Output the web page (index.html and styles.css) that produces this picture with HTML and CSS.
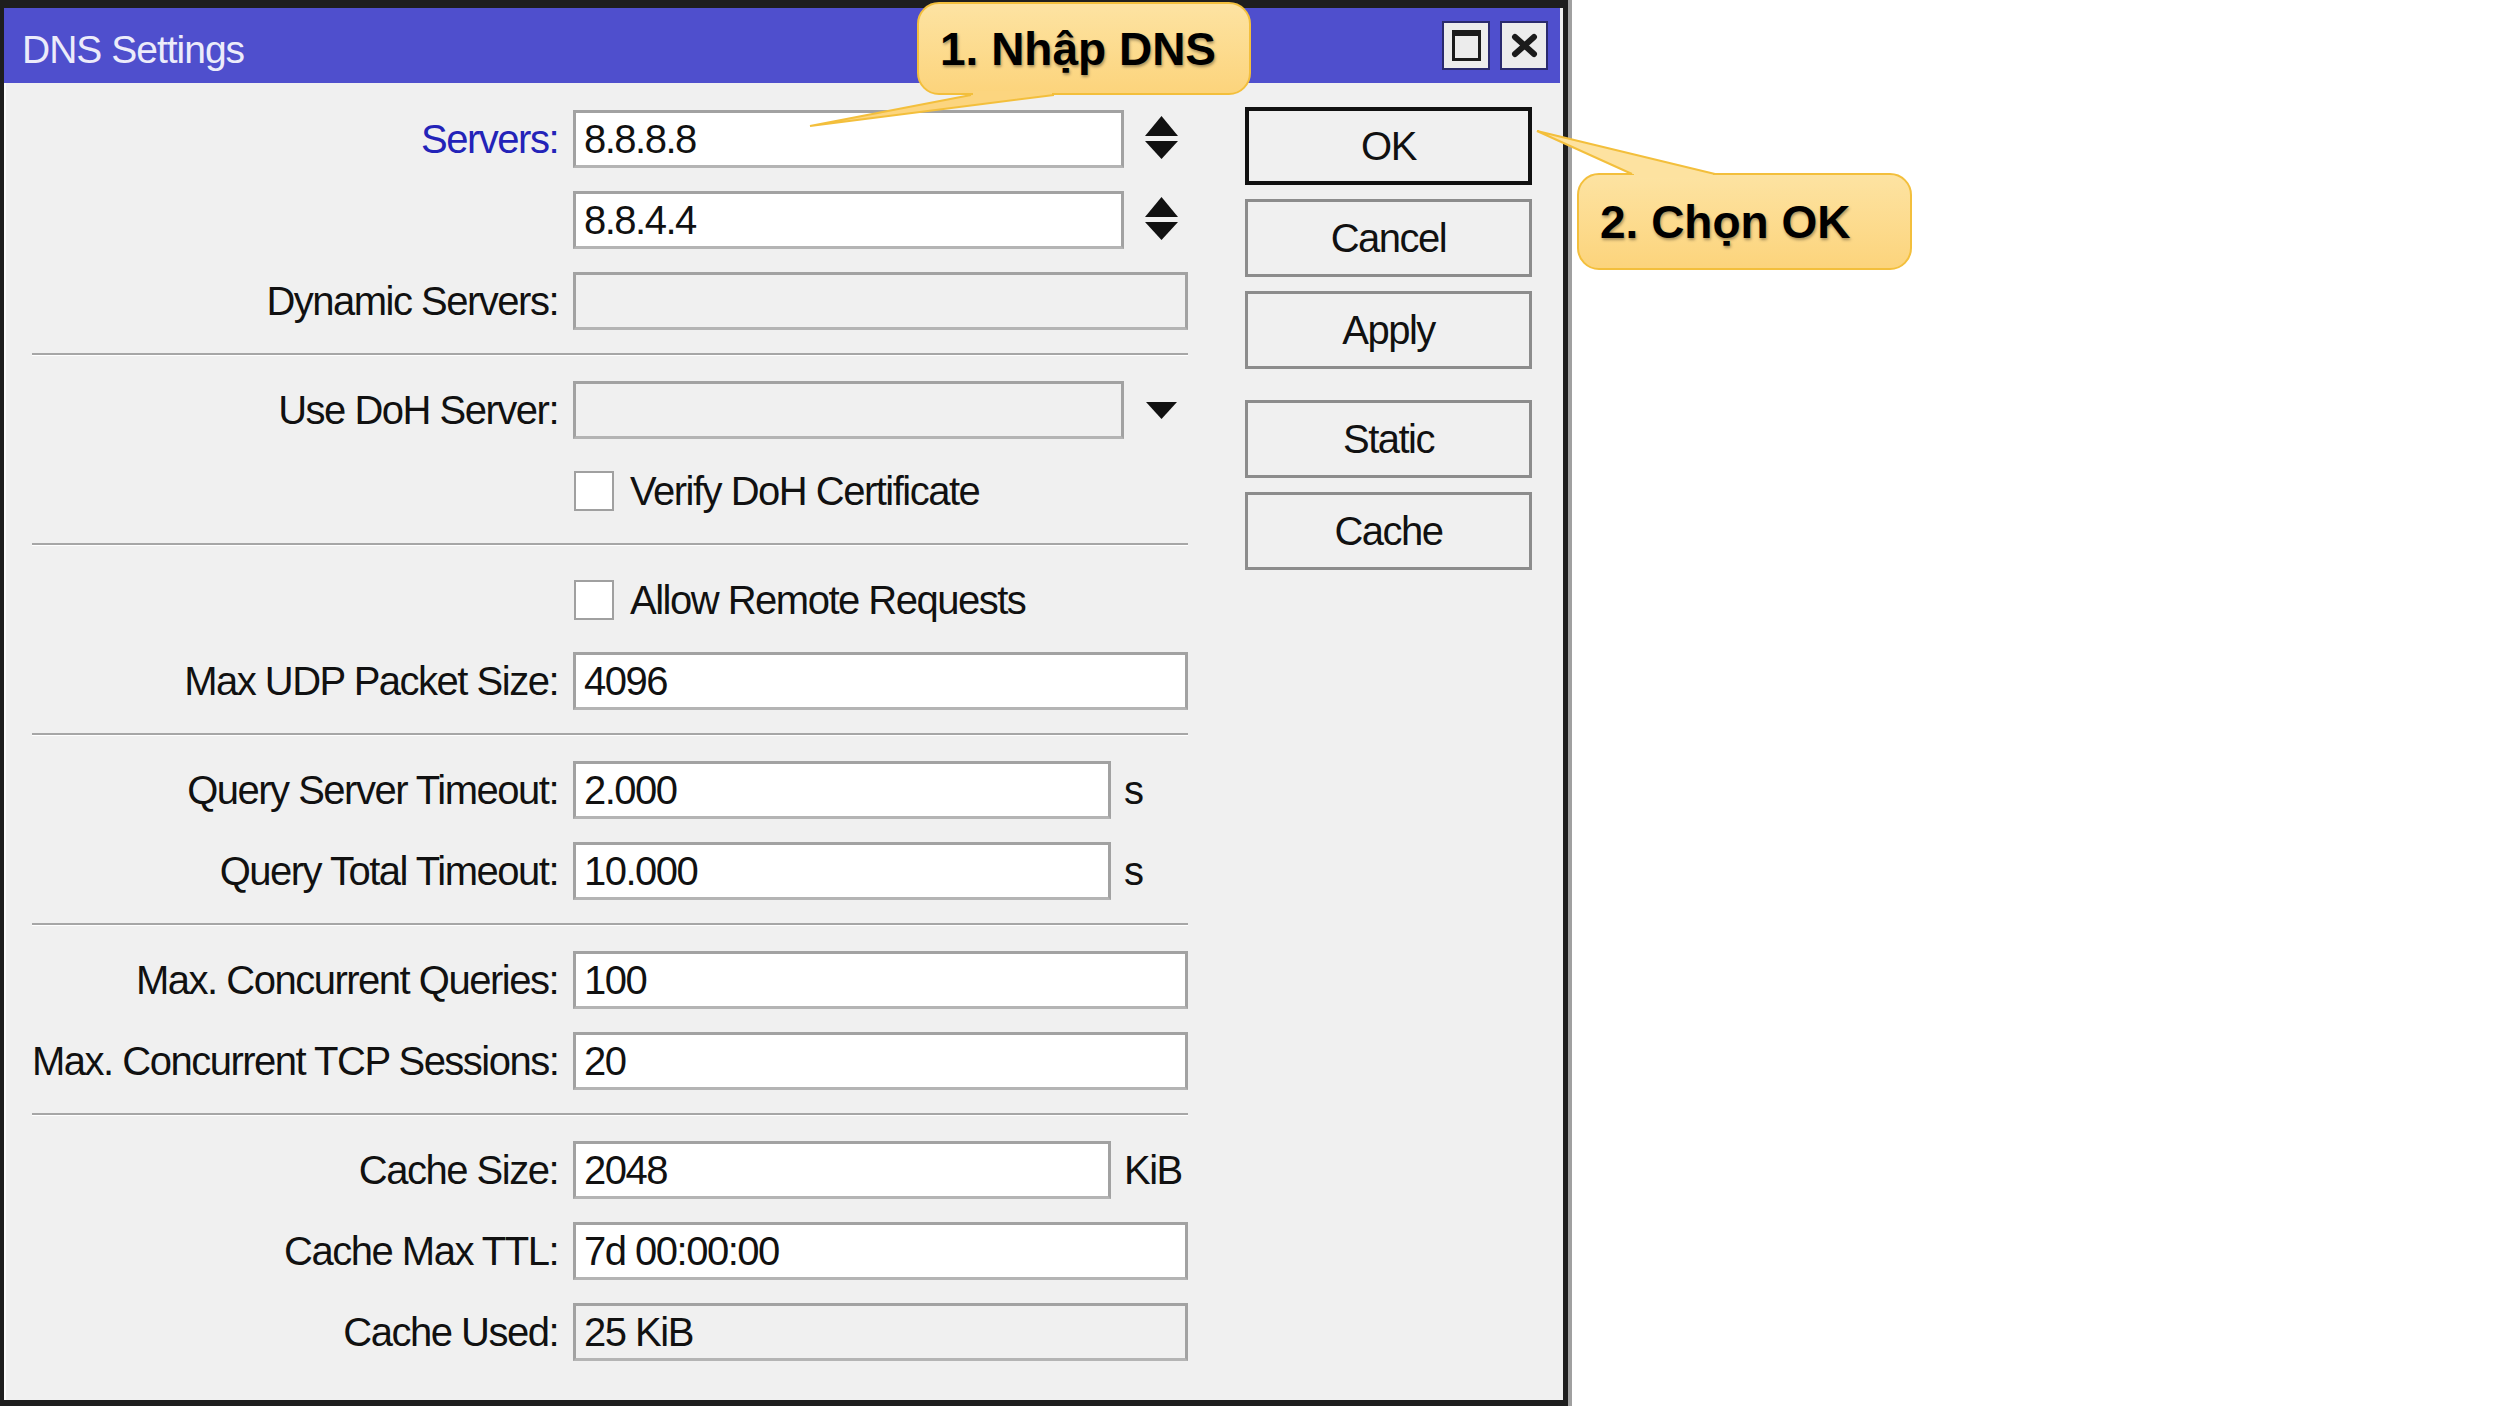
FILE: index.html
```html
<!DOCTYPE html>
<html>
<head>
<meta charset="utf-8">
<link rel="stylesheet" href="styles.css">
</head>
<body>
<div class="page">
  <div class="window">
    <div class="titlebar">
      <span class="title">DNS Settings</span>
      <div class="tb-buttons">
        <div class="tb-btn"><span class="max-icon"></span></div>
        <div class="tb-btn">
          <svg width="27" height="25" viewBox="0 0 27 25"><path d="M4 4 L23 21 M23 4 L4 21" stroke="#1b1b1b" stroke-width="6" stroke-linecap="round"/></svg>
        </div>
      </div>
    </div>
    <div class="content">
      <div class="form">
        <div class="row">
          <div class="label label-link">Servers:</div>
          <div class="field">
            <div class="input w-spin">8.8.8.8</div>
            <svg class="spin" width="33" height="43" viewBox="0 0 33 43"><polygon points="16.5,0 33,20 0,20" fill="#111"/><polygon points="0,25 33,25 16.5,43" fill="#111"/></svg>
          </div>
        </div>
        <div class="row">
          <div class="label"></div>
          <div class="field">
            <div class="input w-spin">8.8.4.4</div>
            <svg class="spin" width="33" height="43" viewBox="0 0 33 43"><polygon points="16.5,0 33,20 0,20" fill="#111"/><polygon points="0,25 33,25 16.5,43" fill="#111"/></svg>
          </div>
        </div>
        <div class="row">
          <div class="label">Dynamic Servers:</div>
          <div class="field"><div class="input w-full ro"></div></div>
        </div>
        <div class="sep"></div>
        <div class="row">
          <div class="label">Use DoH Server:</div>
          <div class="field">
            <div class="input w-spin ro"></div>
            <svg class="drop" width="31" height="17" viewBox="0 0 31 17"><polygon points="0,0 31,0 15.5,17" fill="#111"/></svg>
          </div>
        </div>
        <div class="row">
          <div class="label"></div>
          <div class="field"><span class="check"></span><span class="check-label">Verify DoH Certificate</span></div>
        </div>
        <div class="sep"></div>
        <div class="row">
          <div class="label"></div>
          <div class="field"><span class="check"></span><span class="check-label">Allow Remote Requests</span></div>
        </div>
        <div class="row">
          <div class="label">Max UDP Packet Size:</div>
          <div class="field"><div class="input w-full">4096</div></div>
        </div>
        <div class="sep"></div>
        <div class="row">
          <div class="label">Query Server Timeout:</div>
          <div class="field"><div class="input w-unit">2.000</div><span class="unit">s</span></div>
        </div>
        <div class="row">
          <div class="label">Query Total Timeout:</div>
          <div class="field"><div class="input w-unit">10.000</div><span class="unit">s</span></div>
        </div>
        <div class="sep"></div>
        <div class="row">
          <div class="label">Max. Concurrent Queries:</div>
          <div class="field"><div class="input w-full">100</div></div>
        </div>
        <div class="row">
          <div class="label">Max. Concurrent TCP Sessions:</div>
          <div class="field"><div class="input w-full">20</div></div>
        </div>
        <div class="sep"></div>
        <div class="row">
          <div class="label">Cache Size:</div>
          <div class="field"><div class="input w-unit">2048</div><span class="unit">KiB</span></div>
        </div>
        <div class="row">
          <div class="label">Cache Max TTL:</div>
          <div class="field"><div class="input w-full">7d 00:00:00</div></div>
        </div>
        <div class="row">
          <div class="label">Cache Used:</div>
          <div class="field"><div class="input w-full ro">25 KiB</div></div>
        </div>
      </div>
      <div class="buttons">
        <div class="btn btn-default">OK</div>
        <div class="btn">Cancel</div>
        <div class="btn">Apply</div>
        <div class="btn btn-gap">Static</div>
        <div class="btn">Cache</div>
      </div>
    </div>
  </div>

  <div class="callout callout1">1. Nhập DNS</div>
  <div class="callout callout2">2. Chọn OK</div>

  <svg class="tails" width="2500" height="1406" viewBox="0 0 2500 1406">
    <polygon points="971,95 1054,95 810,126" fill="#fcd57f"/>
    <rect x="973" y="91" width="79" height="5" fill="#fcd57f"/>
    <polyline points="971,95 810,126 1054,95" fill="none" stroke="#f3bf3c" stroke-width="2" stroke-linejoin="miter"/>
    <polygon points="1632,174 1715,174 1537,131" fill="#fde2a0"/>
    <rect x="1634" y="173" width="79" height="5" fill="#fde2a0"/>
    <polyline points="1632,174 1537,131 1715,174" fill="none" stroke="#f3bf3c" stroke-width="2" stroke-linejoin="miter"/>
  </svg>
</div>
</body>
</html>
```

FILE: styles.css
```css
html, body {
  margin: 0;
  padding: 0;
  background: #ffffff;
}

.page {
  position: relative;
  width: 2500px;
  height: 1406px;
  overflow: hidden;
  background: #ffffff;
  font-family: "Liberation Sans", Arial, sans-serif;
}

.window {
  width: 1568px;
  height: 1406px;
  box-sizing: border-box;
  border-top: 8px solid #1e1e1e;
  border-left: 4px solid #1e1e1e;
  border-right: 5px solid #1e1e1e;
  border-bottom: 6px solid #1e1e1e;
  box-shadow: 4px 0 0 #a0a0a0;
  background: #f0f0f0;
  display: flex;
  flex-direction: column;
}

.titlebar {
  height: 75px;
  margin-right: 3px;
  background: #4f4fcd;
  display: flex;
  align-items: center;
  padding-left: 18px;
  box-sizing: border-box;
  flex: none;
}

.title {
  color: #ececfa;
  font-size: 39px;
  letter-spacing: -1px;
  padding-top: 8px;
}

.tb-buttons {
  margin-left: auto;
  margin-right: 12px;
  display: flex;
  gap: 10px;
}

.tb-btn {
  width: 48px;
  height: 49px;
  box-sizing: border-box;
  border: 2px solid #2a2a6e;
  background: #ececec;
  display: flex;
  align-items: center;
  justify-content: center;
}

.max-icon {
  display: block;
  width: 29px;
  height: 31px;
  box-sizing: border-box;
  border: 3px solid #1b1b1b;
  border-top-width: 6px;
}

.content {
  flex: 1;
  display: flex;
  align-items: flex-start;
  border-left: 2px solid #fbfbfb;
  padding-left: 26px;
  padding-top: 24px;
}

.form {
  width: 1156px;
  padding-top: 3px;
}

.row {
  display: grid;
  grid-template-columns: 526px 1fr;
  column-gap: 15px;
  height: 58px;
  align-items: center;
  margin-bottom: 23px;
}

.label {
  text-align: right;
  font-size: 40px;
  letter-spacing: -1.5px;
  color: #111111;
  white-space: nowrap;
}

.label-link {
  color: #2323b8;
}

.field {
  display: flex;
  align-items: center;
  height: 58px;
}

.input {
  height: 58px;
  box-sizing: border-box;
  border: 3px solid #a2a2a2;
  border-bottom-color: #b4b4b4;
  background: #ffffff;
  padding-left: 8px;
  font-size: 40px;
  line-height: 52px;
  letter-spacing: -1.5px;
  color: #111111;
  white-space: nowrap;
}

.input.ro {
  background: #f0f0f0;
}

.w-full { width: 615px; }
.w-spin { width: 551px; }
.w-unit { width: 538px; }

.spin {
  margin-left: 21px;
  margin-top: -4px;
}

.drop {
  margin-left: 22px;
}

.unit {
  margin-left: 13px;
  font-size: 40px;
  letter-spacing: -1.5px;
  color: #111111;
}

.check {
  display: block;
  width: 40px;
  height: 40px;
  box-sizing: border-box;
  margin-left: 1px;
  border: 2px solid #a0a0a0;
  background: #ffffff;
}

.check-label {
  margin-left: 16px;
  font-size: 40px;
  letter-spacing: -1.5px;
  color: #111111;
}

.sep {
  height: 3px;
  box-sizing: border-box;
  border-top: 2px solid #a6a6a6;
  border-bottom: 1px solid #ffffff;
  margin-bottom: 25px;
}

.buttons {
  margin-left: 57px;
  width: 287px;
  display: flex;
  flex-direction: column;
  gap: 14px;
}

.btn {
  height: 78px;
  box-sizing: border-box;
  border: 3px solid #8c8c8c;
  background: #f0f0f0;
  display: flex;
  align-items: center;
  justify-content: center;
  font-size: 40px;
  letter-spacing: -1.5px;
  color: #111111;
}

.btn-default {
  border: 4px solid #111111;
}

.btn-gap {
  margin-top: 17px;
}

.callout {
  position: absolute;
  box-sizing: border-box;
  border: 2px solid #f3bf3c;
  border-radius: 22px;
  background: linear-gradient(#fde3a2, #fcd47c);
  display: flex;
  align-items: center;
  padding-left: 21px;
  font-weight: bold;
  font-size: 46px;
  color: #000000;
  text-shadow: 1px 2px 3px rgba(0, 0, 0, 0.35);
  white-space: nowrap;
}

.callout1 {
  left: 917px;
  top: 2px;
  width: 334px;
  height: 93px;
}

.callout2 {
  left: 1577px;
  top: 173px;
  width: 335px;
  height: 97px;
}

.tails {
  position: absolute;
  left: 0;
  top: 0;
  pointer-events: none;
}
```
